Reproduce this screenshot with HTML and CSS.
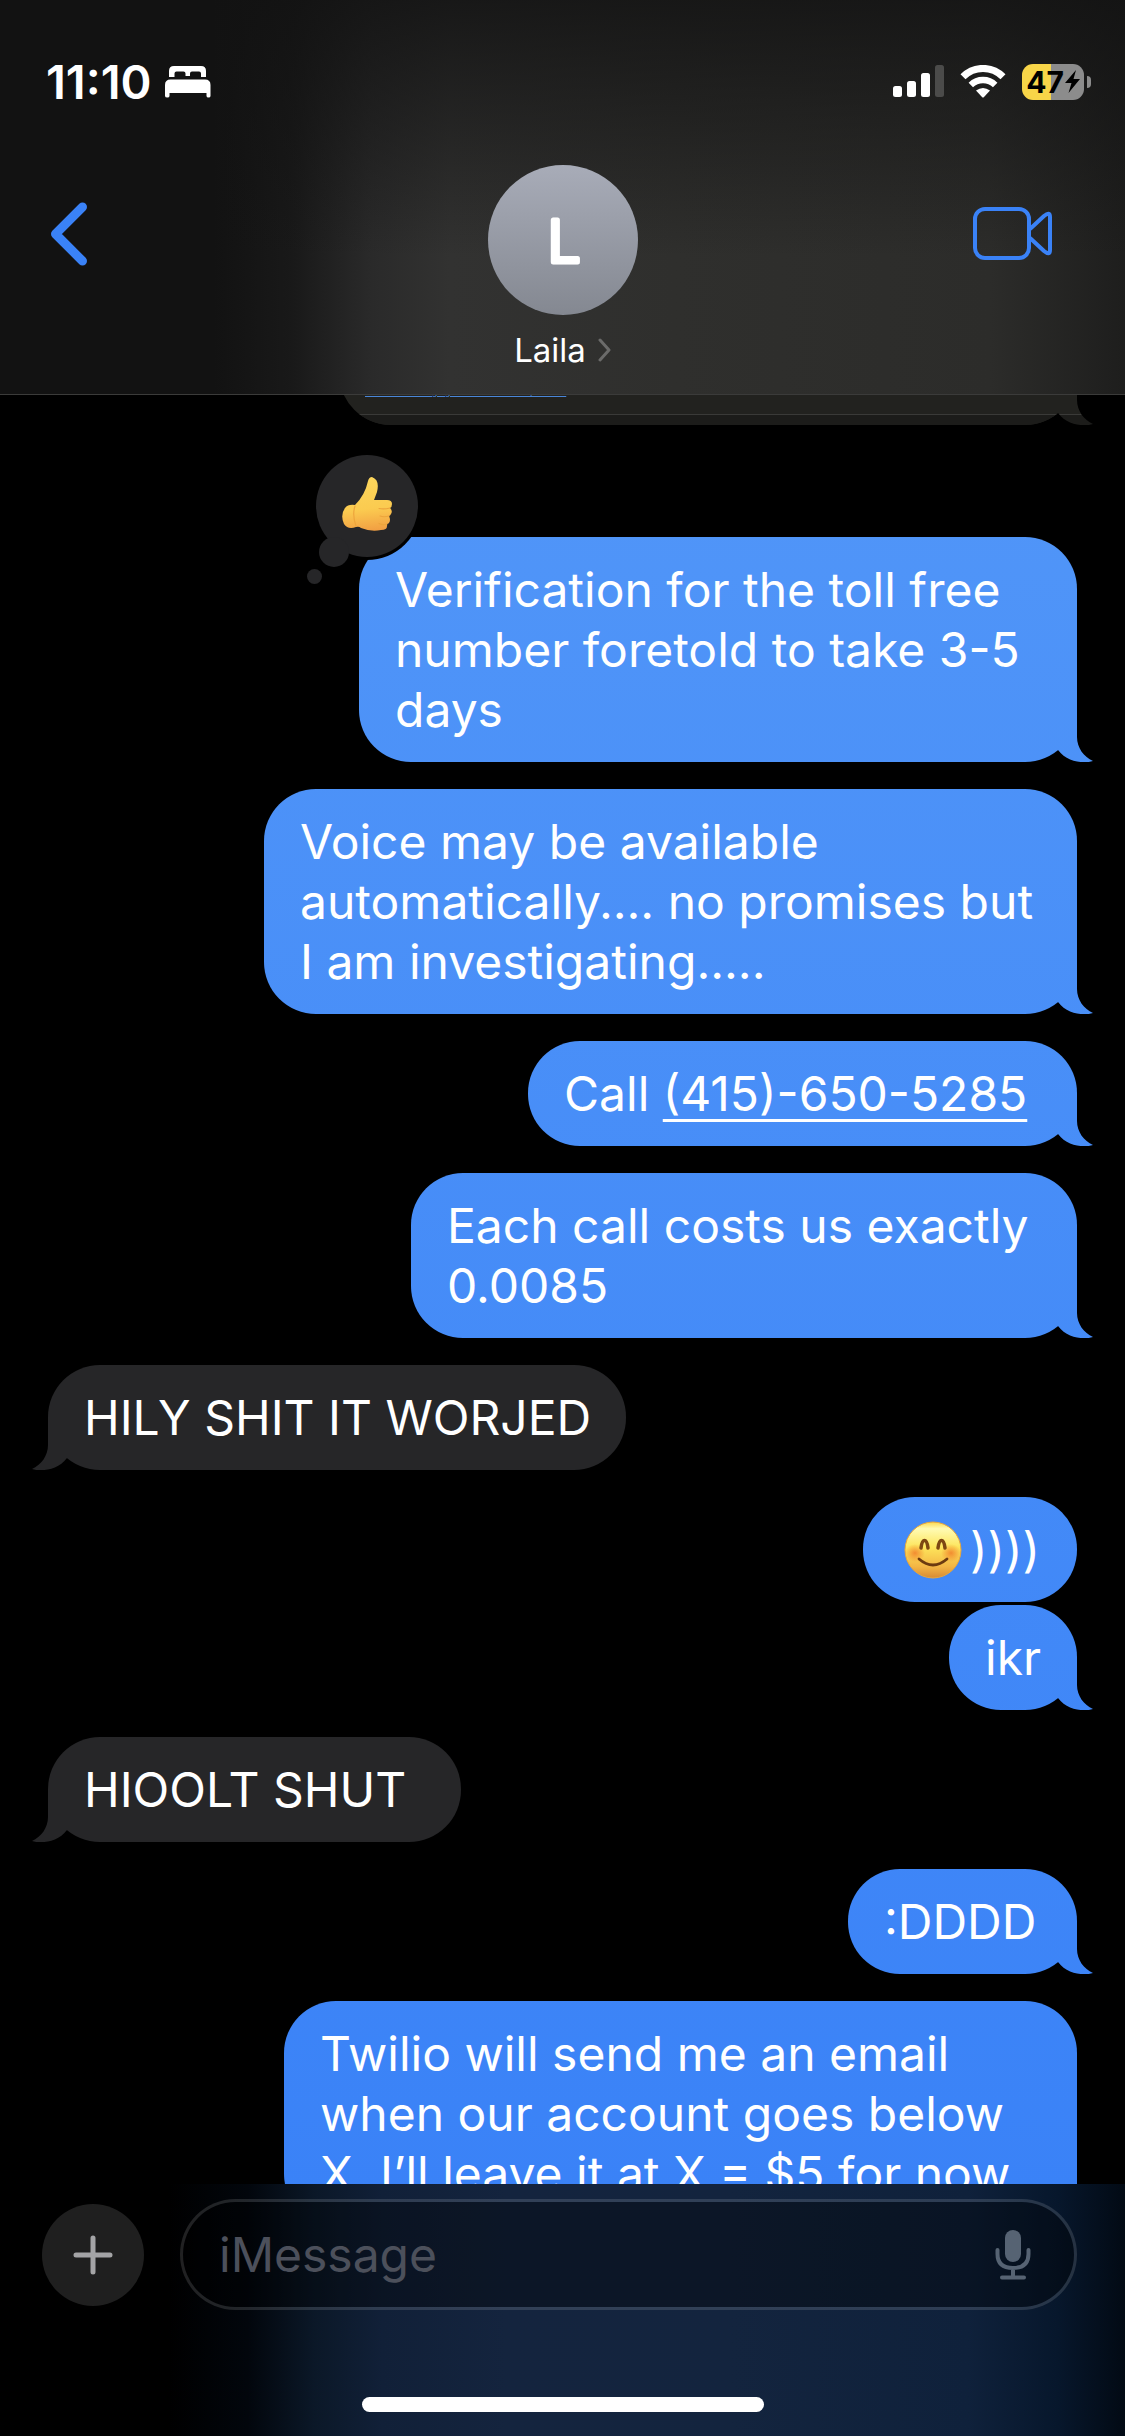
FILE: index.html
```html
<!DOCTYPE html>
<html lang="en">
<head>
<meta charset="utf-8">
<meta name="viewport" content="width=device-width">
<title>Laila – Messages</title>
<link rel="stylesheet" href="styles.css">
</head>
<body>
<header class="header">
  <div class="status">
    <div class="status-left">
      <time>11:10</time>
      <svg width="46" height="32" viewBox="0 0 46 32" role="img" aria-label="Sleep focus" fill="#fff">
        <path d="M4 11V5Q4 0 9 0H36Q41 0 41 5V11H36V7.500Q36 5.500 34 5.500H27Q25 5.500 25 7.500V10H20.500V7.500Q20.500 5.500 18.500 5.500H11.500Q9.500 5.500 9.500 7.500V11Z"/>
        <path d="M0 30V19Q0 13.500 5.500 13.500H40Q45.500 13.500 45.500 19V30Q45.500 31.500 43.500 31.500T41.500 30V27H4.500V30Q4.500 31.500 2.300 31.500T0 30Z"/>
      </svg>
    </div>
    <div class="status-right">
      <svg class="signal" width="51" height="33" viewBox="0 0 51 33" role="img" aria-label="Three of four bars" fill="#fff">
        <rect y="21" width="9" height="11" rx="2.500"/><rect x="14" y="16" width="9" height="16" rx="2.500"/>
        <rect x="28" y="8" width="9" height="24" rx="2.500"/><rect x="42" width="9" height="32" rx="2.500" fill="#4b4b4a"/>
      </svg>
      <svg class="wifi" width="46" height="33" viewBox="0 0 46 33" role="img" aria-label="Wi-Fi" fill="none" stroke="#fff">
        <path d="M3 11.800A28 28 0 0 1 43 11.800" stroke-width="7"/>
        <path d="M10.800 20A17.500 17.500 0 0 1 35.200 20" stroke-width="6.400"/>
        <path d="M16 25.500Q23 20.500 30 25.500L24 32Q23 33 22 32Z" fill="#fff" stroke="none"/>
      </svg>
      <div class="battery"><span>47</span>
        <svg width="15" height="23" viewBox="0 0 15 23" aria-hidden="true"><path d="M11 0L0 13H6.500L3.500 23L15 9H8.500Z"/></svg>
      </div>
    </div>
  </div>
  <nav class="nav">
    <button class="icon-btn back" aria-label="Back">
      <svg width="38" height="64" viewBox="0 0 38 64" fill="none" stroke="#3a82f7" stroke-width="9" stroke-linecap="round" stroke-linejoin="round"><path d="M32.500 5L5.500 32L32.500 59"/></svg>
    </button>
    <button class="contact">
      <svg class="avatar" width="150" height="150" viewBox="0 0 150 150">
        <defs><linearGradient id="av" x2="0" y2="1"><stop stop-color="#a8acb8"/><stop offset="1" stop-color="#848891"/></linearGradient></defs>
        <circle cx="75" cy="75" r="75" fill="url(#av)"/>
        <text x="76" y="97" text-anchor="middle">L</text>
      </svg>
      <span class="name">Laila
        <svg width="13" height="24" viewBox="0 0 13 24" fill="none" stroke="#6b6b6a" stroke-width="3" stroke-linecap="round" stroke-linejoin="round"><path d="M2 2L11 12L2 22"/></svg>
      </span>
    </button>
    <button class="icon-btn video" aria-label="Video call">
      <svg width="80" height="54" viewBox="0 0 80 54" fill="none" stroke="#3a82f7" stroke-width="4" stroke-linejoin="round"><rect x="2" y="2" width="54" height="49" rx="10"/><path d="M57 22L71 9Q77 4 77 10V43Q77 49 71 44L57 31"/></svg>
    </button>
  </nav>
</header>

<main class="thread">
  <div class="preview tail-out">
    <div class="preview-card">
      <a class="preview-title" href="#">Toll Free Messaging Verification for US/Canada</a>
      <div class="preview-foot"></div>
    </div>
  </div>

  <div class="bubble out tail-out w-718">
    <div class="reaction">
      <svg width="111" height="137" viewBox="0 0 111 137" role="img" aria-label="Thumbs up">
        <defs>
          <linearGradient id="th" x1=".4" y1="0" x2=".5" y2="1"><stop stop-color="#fcd65c"/><stop offset=".6" stop-color="#fbcb50"/><stop offset="1" stop-color="#f2a043"/></linearGradient>
        </defs>
        <circle cx="60" cy="54" r="54"/>
        <circle cx="60" cy="54" r="51" fill="#262628"/>
        <circle cx="27" cy="100" r="15" fill="#262628"/>
        <circle cx="7.500" cy="124.500" r="7.500" fill="#262628"/>
        <g transform="translate(35 25)">
          <path fill="url(#th)" d="M13 28Q23 18 26 4Q27 0 30 0Q38 3 35 15L32 23H45Q50 23 50 27Q50 30 48 31Q51 34 49 37Q48 39 47 39Q49 43 47 46Q46 47 45 47Q46 53 39 53Q29 55 19 51Q17 49 14 50Q6 53 2 47Q-2 38 3 31Q6 27 13 28Z"/>
          <path d="M37 31.500Q42 32.500 48 31M38 39Q42 40.500 47 39M37 46.500Q41 48.500 45 47M13 29Q10 38 14 49" fill="none" stroke="#eda53c" stroke-width="1.200" stroke-linecap="round"/>
        </g>
      </svg>
    </div>
    <p>Verification for the toll free<br>number foretold to take 3-5<br>days</p>
  </div>
  <div class="bubble out tail-out w-813"><p>Voice may be available<br>automatically.... no promises but<br>I am investigating.....</p></div>
  <div class="bubble out tail-out w-549"><p>Call <a href="tel:4156505285">(415)-650-5285</a></p></div>
  <div class="bubble out tail-out w-666"><p>Each call costs us exactly<br>0.0085</p></div>
  <div class="bubble in tail-in w-578"><p>HILY SHIT IT WORJED</p></div>
  <div class="bubble out followed w-214"><p class="with-emoji">
    <svg width="58" height="58" viewBox="0 0 58 58" role="img" aria-label="Smiling face">
      <defs>
        <linearGradient id="face" x2="0" y2="1"><stop stop-color="#fbd84c"/><stop offset=".12" stop-color="#fffbb4"/><stop offset=".45" stop-color="#fde55b"/><stop offset=".8" stop-color="#f3b544"/><stop offset="1" stop-color="#d88a33"/></linearGradient>
        <radialGradient id="blush"><stop stop-color="#f07a28" stop-opacity=".8"/><stop offset="1" stop-color="#f07a28" stop-opacity="0"/></radialGradient>
      </defs>
      <circle cx="29" cy="29" r="28" fill="url(#face)" stroke="#e9a63b"/>
      <ellipse cx="11" cy="32" rx="10" ry="9" fill="url(#blush)"/><ellipse cx="47" cy="32" rx="10" ry="9" fill="url(#blush)"/>
      <path d="M17 27Q18 19.500 20.500 19.500T24 27M34 27Q35 19.500 37.500 19.500T41 27" fill="none" stroke="#7d4713" stroke-width="3.500" stroke-linecap="round"/>
      <path d="M15 38Q29 50 43 38" fill="none" stroke="#6c3a10" stroke-width="2.800" stroke-linecap="round"/>
    </svg>))))</p></div>
  <div class="bubble out tail-out w-128"><p>ikr</p></div>
  <div class="bubble in tail-in w-413"><p>HIOOLT SHUT</p></div>
  <div class="bubble out tail-out w-229"><p>:DDDD</p></div>
  <div class="bubble out tail-out w-793"><p>Twilio will send me an email<br>when our account goes below<br>X. I’ll leave it at X = $5 for now</p></div>
</main>

<footer class="footer">
  <form class="composer">
    <button type="button" class="plus" aria-label="Add">
      <svg width="40" height="40" viewBox="0 0 40 40" stroke="#a4a4a6" stroke-width="5" stroke-linecap="round"><path d="M20 3V37M3 20H37"/></svg>
    </button>
    <div class="field">
      <input type="text" placeholder="iMessage" aria-label="iMessage">
      <button type="button" class="mic" aria-label="Dictate">
        <svg width="36" height="50" viewBox="0 0 36 50" fill="none" stroke="#566373" stroke-width="4" stroke-linecap="round"><rect x="10" y="0" width="16" height="32" rx="8" fill="#566373" stroke="none"/><path d="M2.500 20V24Q2.500 38 18 38T33.500 24V20M18 39V47M7 47.500H29"/></svg>
      </button>
    </div>
  </form>
  <div class="home"></div>
</footer>
</body>
</html>
```
FILE: styles.css
```css
* { box-sizing: border-box; }

body {
  margin: 0;
  height: 100vh;
  display: flex;
  flex-direction: column;
  background: #000;
  color: #fff;
  font-family: Inter, "Liberation Sans", sans-serif;
  font-size: 48px;
  line-height: 60px;
}

button {
  margin: 0;
  padding: 0;
  border: 0;
  background: none;
  color: inherit;
  font: inherit;
}

svg { display: block; flex: none; }
p { margin: 0; white-space: nowrap; }

/* Header */
.header {
  flex: none;
  border-bottom: 1px solid #3b3b3a;
  background:
    linear-gradient(180deg, rgba(18, 18, 18, .82), rgba(18, 18, 18, .45) 30%, rgba(18, 18, 18, 0) 65%),
    linear-gradient(90deg, #121212 19%, #191919 26%, #2a2a2a 33%, #323231 40%, #2f2f2d 60%, #2c2c2a 88%, #1e1e1d 100%);
}

.status {
  height: 165px;
  padding: 0 34px 2px 46px;
  display: flex;
  align-items: center;
  justify-content: space-between;
}

.status-left, .status-right { display: flex; align-items: center; }
.status-left { gap: 13px; font-size: 47px; font-weight: 600; }
.status-right { gap: 16px; }

.battery {
  position: relative;
  width: 62px;
  height: 36px;
  margin-right: 7px;
  border-radius: 11px;
  display: flex;
  align-items: center;
  justify-content: center;
  gap: 1px;
  background: linear-gradient(90deg, #f8d548 47%, #8c8c8c 47%);
  color: #000;
  font-size: 30px;
  font-weight: 700;
  line-height: 36px;
}

.battery::after {
  content: "";
  position: absolute;
  right: -7px;
  top: 12px;
  width: 4px;
  height: 12px;
  border-radius: 0 4px 4px 0;
  background: #8c8c8c;
}

.nav {
  display: grid;
  grid-template-columns: 1fr auto 1fr;
  align-items: start;
  padding: 0 72px 24px 50px;
}

.icon-btn { padding-top: 37px; }
.back { justify-self: start; }
.video { justify-self: end; padding-top: 42px; }

.contact {
  display: flex;
  flex-direction: column;
  align-items: center;
  gap: 15px;
  margin-left: 22px;
}

.avatar text {
  fill: #fff;
  stroke: #fff;
  stroke-width: 5px;
  stroke-linejoin: round;
  font-size: 58px;
  font-weight: 300;
}

.name {
  display: flex;
  align-items: center;
  gap: 12px;
  font-size: 33px;
  line-height: 40px;
}

/* Conversation */
.thread {
  flex: 1;
  min-height: 0;
  overflow: hidden;
  display: flex;
  flex-direction: column;
  align-items: flex-start;
  gap: 27px;
  padding: 0 48px;
}

.bubble {
  flex: none;
  position: relative;
  padding: 23px 36px 22px;
  border-radius: 52px;
}

.out { align-self: flex-end; }
.in { background: #262628; }

.out, .out.tail-out::after {
  background: linear-gradient(180deg, #5095f8 20%, #3a82f7 90%) fixed;
}

.followed { margin-bottom: -24px; }

.tail-out::after, .tail-in::after {
  content: "";
  position: absolute;
  bottom: 0;
  width: 36px;
  height: 52px;
}

.tail-out::after {
  right: -17px;
  clip-path: path("M0 0H19V27C19 38 26 47 35 51C25 54 9 52 0 40Z");
}

.tail-in::after {
  left: -17px;
  background: #262628;
  clip-path: path("M36 0H17V27C17 38 10 47 1 51C11 54 27 52 36 40Z");
}

.bubble a { color: inherit; text-underline-offset: 8px; text-decoration-thickness: 3px; }

.w-128 { width: 128px; }
.w-214 { width: 214px; }
.w-229 { width: 229px; }
.w-413 { width: 413px; }
.w-549 { width: 549px; }
.w-578 { width: 578px; }
.w-666 { width: 666px; }
.w-718 { width: 718px; }
.w-793 { width: 793px; }
.w-813 { width: 813px; }

.with-emoji { display: flex; align-items: center; gap: 8px; padding-left: 5px; }

.reaction {
  position: absolute;
  left: -52px;
  top: -85px;
}

/* Shared link card, scrolled mostly under the header */
.preview {
  position: relative;
  flex: none;
  align-self: flex-end;
  width: 738px;
  margin-top: -82px;
  margin-bottom: 85px;
}

.preview.tail-out::after {
  background: linear-gradient(180deg, #22221f 41px, #3a3a38 41px, #3a3a38 42px, #1c1c1a 42px);
}

.preview-card {
  border-radius: 0 0 52px 52px;
  overflow: hidden;
  background: #22221f;
}

.preview-title {
  display: block;
  padding: 73px 26px 0;
  color: #4a86d8;
  font-size: 9px;
  line-height: 12px;
}

.preview-foot {
  height: 11px;
  margin-top: 16px;
  border-top: 1px solid #3a3a38;
  background: #1c1c1a;
}

/* Composer */
.footer {
  flex: none;
  height: 252px;
  padding: 15px 48px 24px 42px;
  display: flex;
  flex-direction: column;
  justify-content: space-between;
  background: linear-gradient(90deg, #000 15%, #02060c 22%, #0b1828 28%, #112038 34%, #14243e 45%, #13243e 65%, #0f213b 86%, #07172c 94%, #020a14 100%);
}

.composer { display: flex; align-items: center; gap: 36px; }

.plus {
  width: 102px;
  height: 102px;
  border-radius: 50%;
  display: grid;
  place-items: center;
  background: #1f1f1f;
}

.field {
  flex: 1;
  height: 111px;
  padding: 0 43px 0 36px;
  border: 3px solid rgba(255, 255, 255, .13);
  border-radius: 56px;
  display: flex;
  align-items: center;
  background: rgba(0, 0, 0, .37);
  background-clip: padding-box;
}

.field input {
  flex: 1;
  min-width: 0;
  padding: 0;
  border: 0;
  background: none;
  color: #fff;
  font: inherit;
}

.field input::placeholder { color: #4c505b; opacity: 1; }

.home {
  align-self: center;
  width: 402px;
  height: 15px;
  margin-left: 6px;
  border-radius: 8px;
  background: #fff;
}
```
